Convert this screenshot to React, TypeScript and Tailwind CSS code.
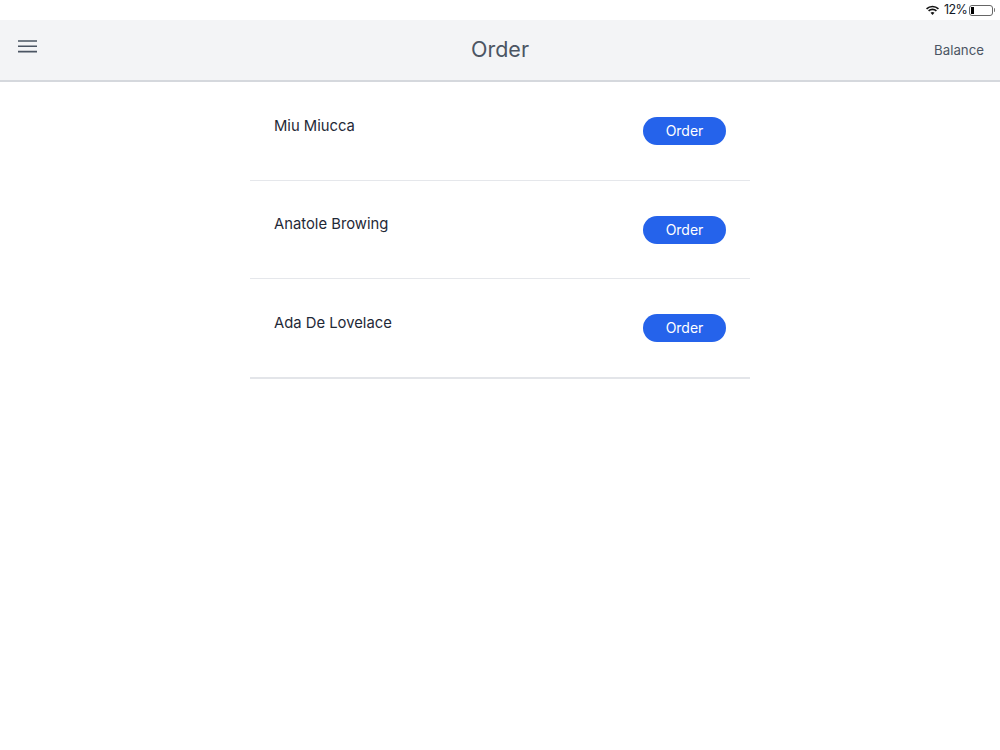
const names = ["Miu Miucca", "Anatole Browing", "Ada De Lovelace"];

export default function App() {
  return (
    <div className="min-h-[750px] bg-white font-['Inter',sans-serif]">
      <div className="flex h-5 items-center justify-end pr-[5px] text-[12.5px] text-[#111827]">
        <svg width="13" height="11" viewBox="0 0 15 11" className="mr-[5px]">
          <path d="M0.6 3.6 A10 10 0 0 1 14.4 3.6" fill="none" stroke="#111" strokeWidth="1.9" />
          <path d="M3 6 A6.5 6.5 0 0 1 12 6" fill="none" stroke="#111" strokeWidth="1.9" />
          <path d="M5.2 8.2 A3.4 3.4 0 0 1 9.8 8.2 L7.5 10.8 Z" fill="#111" />
        </svg>
        <span className="mr-[3px] mt-px w-[22px] whitespace-nowrap tracking-[-0.6px]">12%</span>
        <div className="flex items-center">
          <div className="flex h-[11px] w-[24px] items-center rounded-[3px] border border-[#666] p-px">
            <div className="h-full w-[3px] bg-black" />
          </div>
          <div className="ml-px h-1 w-px rounded-r bg-[#777]" />
        </div>
      </div>
      <header className="grid h-[62px] grid-cols-3 items-center border-b-2 border-[#d5d8dd] bg-[#f3f4f6] px-4 text-[#4b5563]">
        <svg width="19" height="13" viewBox="0 0 19 13" className="mb-2 ml-[2px]">
          <path d="M0 1h19M0 6.3h19M0 11.6h19" stroke="#4b5563" strokeWidth="1.6" fill="none" />
        </svg>
        <h1 className="text-center text-[21.5px] leading-none">Order</h1>
        <span className="mt-px text-right text-[13.25px]">Balance</span>
      </header>
      <main className="mx-auto w-[500px]">
        {names.map((name, i) => (
          <div
            key={name}
            className={`flex justify-between px-[24px] pt-[35px] ${i === 2 ? "h-[99.5px] border-b-2 border-[#e3e5e9]" : "h-[98.5px] border-b border-[#e5e7eb]"}`}
          >
            <span className="mt-[-1.5px] text-[14.8px] leading-5 text-[#1f2937]">{name}</span>
            <button className="h-[28px] w-[83px] rounded-full bg-[#2563eb] text-sm text-white">Order</button>
          </div>
        ))}
      </main>
    </div>
  );
}
